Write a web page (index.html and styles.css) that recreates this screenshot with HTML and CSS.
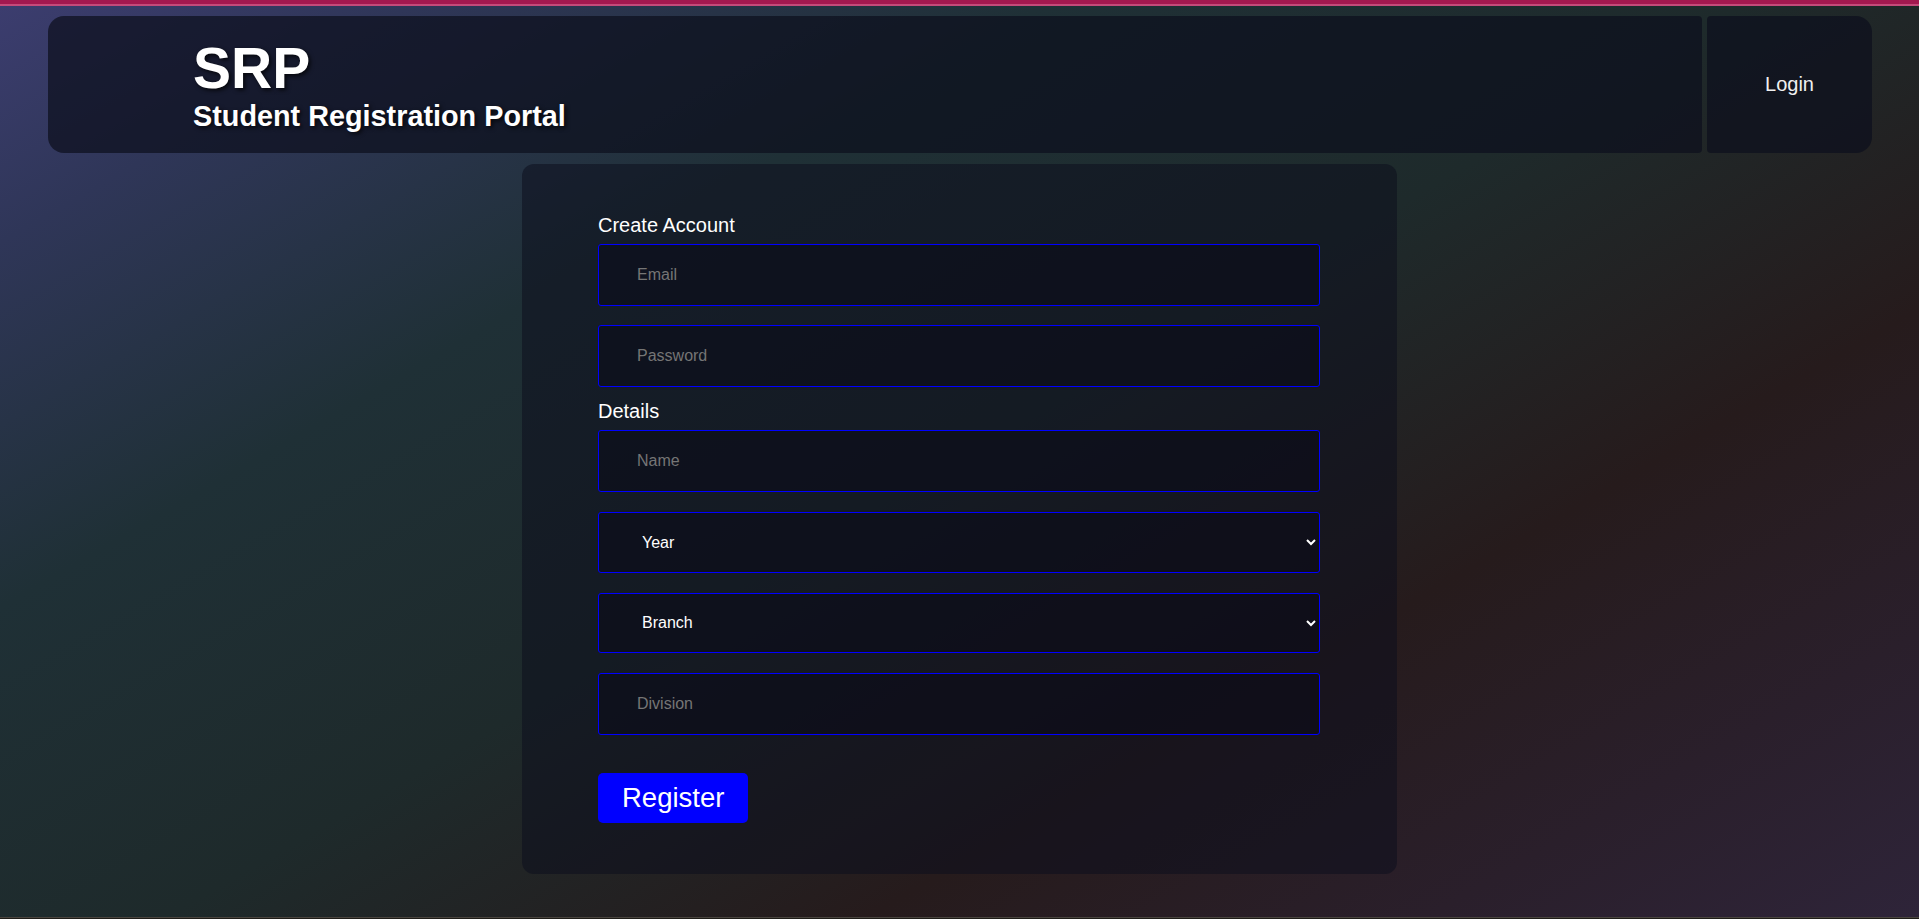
FILE: index.html
```html
<!DOCTYPE html>
<html lang="en">
<head>
<meta charset="utf-8">
<title>SRP - Student Registration Portal</title>
<link rel="stylesheet" href="styles.css">
</head>
<body>
<div class="topbar"></div>
<header class="header">
  <div class="brand">
    <div class="brand-title">SRP</div>
    <div class="brand-sub">Student Registration Portal</div>
  </div>
  <a class="login" href="#">Login</a>
</header>
<main class="card">
  <form class="form">
    <div class="section-label">Create Account</div>
    <input class="field" type="email" placeholder="Email">
    <input class="field field-end" type="password" placeholder="Password">
    <div class="section-label">Details</div>
    <input class="field field-detail" type="text" placeholder="Name">
    <select class="field field-detail select">
      <option>Year</option>
    </select>
    <select class="field field-detail select">
      <option>Branch</option>
    </select>
    <input class="field field-last" type="text" placeholder="Division">
    <button class="register" type="button">Register</button>
  </form>
</main>
</body>
</html>
```
FILE: styles.css
```css
html {
  background: #1f1d18;
}
body {
  margin: 0;
  height: 918px;
  box-sizing: border-box;
  border-bottom: 1px solid #4a453f;
  background: linear-gradient(150deg, #3c3d6f 0%, #2f3658 12%, #1f3036 30%, #1e2a2b 50%, #261b1c 70%, #2a1f2b 86%, #2e2439 100%);
  font-family: "Liberation Sans", Arial, sans-serif;
  color: #fff;
  overflow: hidden;
}
.topbar {
  height: 4px;
  background: #a3184f;
  border-bottom: 2px solid #c54a7a;
}
.header {
  display: flex;
  gap: 5px;
  margin: 10px 47px 0 48px;
  height: 137px;
}
.brand {
  flex: 1;
  background: rgba(13, 15, 29, 0.72);
  border-radius: 16px 4px 4px 16px;
  padding: 20px 0 0 145px;
  box-sizing: border-box;
  text-shadow: 2px 2px 4px rgba(0, 0, 0, 0.75);
}
.brand-title {
  font-size: 57px;
  font-weight: bold;
  line-height: 64px;
}
.brand-sub {
  font-size: 28.8px;
  font-weight: bold;
  line-height: 33px;
}
.login {
  width: 165px;
  display: flex;
  align-items: center;
  justify-content: center;
  background: rgba(13, 15, 29, 0.72);
  border-radius: 4px 16px 16px 4px;
  color: #f0f0f0;
  text-decoration: none;
  font-size: 20px;
}
.card {
  width: 875px;
  box-sizing: border-box;
  margin: 11px auto 0;
  padding: 50px 77px 51px 76px;
  background: rgba(13, 15, 29, 0.55);
  border-radius: 12px;
}
.form {
  display: flex;
  flex-direction: column;
  align-items: flex-start;
}
.section-label {
  font-size: 20px;
  line-height: 23px;
  margin-bottom: 7px;
}
.field {
  width: 100%;
  height: 62px;
  box-sizing: border-box;
  margin: 0 0 19px;
  padding: 0 36px 0 38px;
  border: 1px solid #0000ff;
  border-radius: 3px;
  background: rgba(7, 7, 21, 0.5);
  color: #fff;
  font-family: "Liberation Sans", Arial, sans-serif;
  font-size: 16px;
  outline: none;
}
.field::placeholder {
  color: #757575;
}
.field-end {
  margin-bottom: 13px;
}
.field-detail {
  margin-bottom: 20px;
}
.select {
  height: 60.5px;
  padding: 0 4px 0 39px;
  color: #fff;
}
.select option {
  background: #10121f;
}
.field-last {
  margin-bottom: 38px;
}
.register {
  height: 50px;
  padding: 0 24px;
  border: none;
  border-radius: 5px;
  background: #0000ff;
  color: #fff;
  font-family: "Liberation Sans", Arial, sans-serif;
  font-size: 27.5px;
  cursor: pointer;
}
```
